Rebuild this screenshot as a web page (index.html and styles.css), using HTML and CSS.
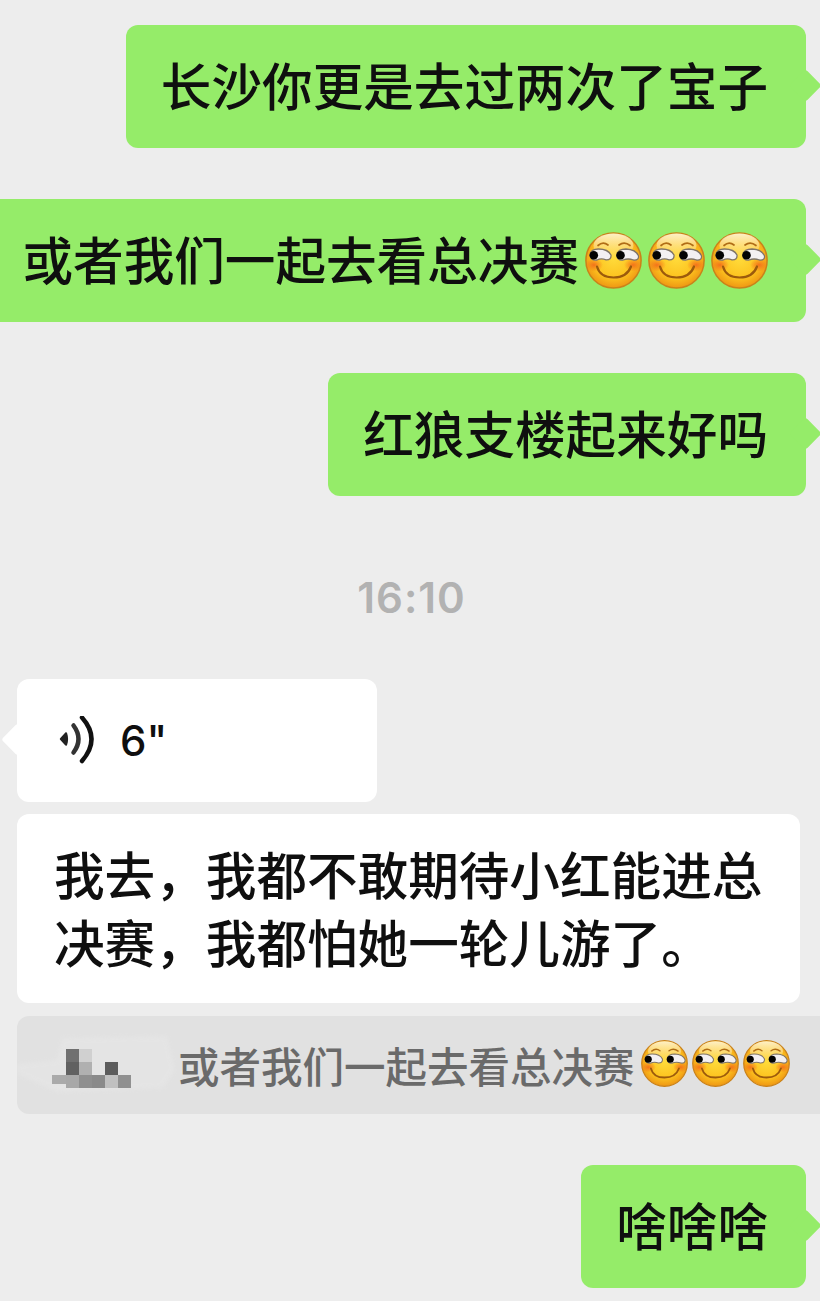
FILE: index.html
```html
<!DOCTYPE html>
<html lang="zh-CN">
<head>
<meta charset="utf-8">
<title>聊天</title>
<link rel="stylesheet" href="styles.css">
</head>
<body>
<svg class="defs" aria-hidden="true">
  <defs>
    <radialGradient id="face" cx="50%" cy="45%" r="60%">
      <stop offset="0" stop-color="#ffdc3c"/>
      <stop offset="0.6" stop-color="#fdc31f"/>
      <stop offset="1" stop-color="#ea8a10"/>
    </radialGradient>
    <linearGradient id="shine" x1="0" y1="0" x2="0" y2="1">
      <stop offset="0" stop-color="#fff4cf" stop-opacity="0.95"/>
      <stop offset="1" stop-color="#fff4cf" stop-opacity="0"/>
    </linearGradient>
    <radialGradient id="blush" cx="50%" cy="50%" r="50%">
      <stop offset="0" stop-color="#f2651a" stop-opacity="0.85"/>
      <stop offset="1" stop-color="#f2651a" stop-opacity="0"/>
    </radialGradient>
    <symbol id="smirk" viewBox="0 0 57 57">
      <circle cx="28.5" cy="28.5" r="27.6" fill="url(#face)" stroke="#c9821a" stroke-width="1.5"/>
      <ellipse cx="28.5" cy="13.5" rx="20" ry="12" fill="url(#shine)"/>
      <ellipse cx="9" cy="33" rx="9" ry="6.500" fill="url(#blush)"/>
      <ellipse cx="48" cy="33" rx="9" ry="6.500" fill="url(#blush)"/>
      <path d="M13 13.5Q18 9 23 13" fill="none" stroke="#b06d16" stroke-width="1.700" stroke-linecap="round"/>
      <path d="M34 13Q39.5 9 45 13.5" fill="none" stroke="#b06d16" stroke-width="1.700" stroke-linecap="round"/>
      <path d="M5 22.500Q6 17 13.500 17Q23 17 26 23Q26.500 28 21 27.800Q16 26 12 28Q5.500 29 5 22.500Z" fill="#f3f0f2" stroke="#7f7468" stroke-width="1.300"/>
      <path d="M32 22.500Q33 17 41 17Q51 17.500 53.500 24Q54 28.500 48.500 28Q43 26 38 28Q32 29 32 22.500Z" fill="#f3f0f2" stroke="#7f7468" stroke-width="1.300"/>
      <circle cx="8.800" cy="23.300" r="4.300" fill="#030303"/>
      <circle cx="35.500" cy="23.300" r="4.300" fill="#030303"/>
      <path d="M12 34.500Q15 45.500 28.500 45.500Q42 45.500 46 34.500" fill="none" stroke="#9c5a0c" stroke-width="2.200" stroke-linecap="round"/>
    </symbol>
    <filter id="soft" x="-10%" y="-10%" width="120%" height="120%">
      <feGaussianBlur stdDeviation="2"/>
    </filter>
  </defs>
</svg>

<main class="chat">
  <div class="bubble sent">长沙你更是去过两次了宝子</div>
  <div class="bubble sent gap">或者我们一起去看总决赛<svg class="emoji"><use href="#smirk"/></svg><svg class="emoji"><use href="#smirk"/></svg><svg class="emoji"><use href="#smirk"/></svg></div>
  <div class="bubble sent gap">红狼支楼起来好吗</div>

  <div class="time">16:10</div>

  <div class="bubble received voice">
    <svg class="wave" viewBox="0 0 40 50" aria-hidden="true">
      <path d="M8 17.500L3 23L8 28.500Q9.800 23 8 17.500Z" fill="#222" stroke="#222" stroke-width="2.400" stroke-linejoin="round"/>
      <path d="M15.500 9.500Q25.500 23 15.500 36.500" fill="none" stroke="#333" stroke-width="4.500" stroke-linecap="round"/>
      <path d="M24 1.500Q43 23 24 45" fill="none" stroke="#111" stroke-width="4.500" stroke-linecap="round"/>
    </svg>
    <span class="seconds">6"</span>
  </div>
  <div class="bubble received text">我去&#xFF0C;我都不敢期待小红能进总决赛&#xFF0C;我都怕她一轮儿游了。</div>

  <div class="quote">
    <svg class="mosaic" viewBox="0 0 160 70" aria-hidden="true">
      <path d="M0 34L40 30L45 8L150 6L158 40L146 58L40 62L0 44Z" fill="#e9e9e9" opacity="0.45" filter="url(#soft)"/>
      <rect x="49" y="19" width="13" height="13" fill="#707070"/>
      <rect x="62" y="19" width="13" height="13" fill="#d0d0d0"/>
      <rect x="49" y="32" width="13" height="13" fill="#616161"/>
      <rect x="62" y="32" width="13" height="13" fill="#b0b0b0"/>
      <rect x="88" y="32" width="13" height="13" fill="#5c5c5c"/>
      <rect x="35" y="45" width="14" height="9" fill="#aaaaaa"/>
      <rect x="49" y="45" width="13" height="13" fill="#a8a8a8"/>
      <rect x="62" y="45" width="13" height="13" fill="#8f8f8f"/>
      <rect x="75" y="45" width="13" height="13" fill="#8a8a8a"/>
      <rect x="88" y="45" width="13" height="13" fill="#c0c0c0"/>
      <rect x="101" y="45" width="13" height="13" fill="#909090"/>
    </svg>
    <span class="quote-text">或者我们一起去看总决赛</span><svg class="emoji small first"><use href="#smirk"/></svg><svg class="emoji small"><use href="#smirk"/></svg><svg class="emoji small"><use href="#smirk"/></svg>
  </div>

  <div class="bubble sent gap">啥啥啥</div>
</main>
</body>
</html>
```

FILE: styles.css
```css
html, body {
  margin: 0;
  padding: 0;
}

body {
  width: 820px;
  height: 1301px;
  overflow: hidden;
  background: #ededed;
  font-family: "Noto Sans CJK SC", "Noto Sans", sans-serif;
  color: #0f0f0f;
}

.defs {
  position: absolute;
  width: 0;
  height: 0;
}

.chat {
  display: flex;
  flex-direction: column;
  align-items: flex-start;
  padding: 25px 14px 0 17px;
}

.bubble {
  position: relative;
  box-sizing: border-box;
  flex: none;
  height: 123px;
  padding: 25px 38px 30px 35px;
  border-radius: 12px;
  font-size: 50.6px;
  font-weight: 500;
  line-height: 68px;
}

.bubble::after {
  content: "";
  position: absolute;
  top: 49px;
  width: 23px;
  height: 23px;
  border-radius: 3px;
  transform: rotate(45deg);
}

.sent {
  align-self: flex-end;
  background: #95ec69;
  white-space: nowrap;
}

.sent::after {
  right: -11px;
  background: #95ec69;
}

.gap {
  margin-top: 51px;
}

.received {
  background: #ffffff;
}

.received::after {
  left: -11px;
  background: #ffffff;
}

.time {
  align-self: center;
  margin: 78px 0 57px;
  font-family: "Inter", "Liberation Sans", sans-serif;
  font-size: 42px;
  font-weight: 600;
  letter-spacing: 1px;
  line-height: 48px;
  color: #b2b2b2;
}

.voice {
  display: flex;
  align-items: center;
  width: 360px;
  padding: 0 0 0 41px;
}

.wave {
  flex: none;
  width: 40px;
  height: 50px;
}

.seconds {
  margin-left: 22px;
  font-family: "Inter", "Liberation Sans", sans-serif;
  font-size: 42px;
  font-weight: 500;
  line-height: 48px;
}

.text {
  width: 783px;
  height: 189px;
  margin-top: 12px;
  padding: 25px 37px 28px;
}

.text::after {
  display: none;
}

.quote {
  display: flex;
  flex: none;
  align-items: center;
  align-self: stretch;
  box-sizing: border-box;
  height: 98px;
  margin: 13px -30px 0 0;
  border-radius: 12px;
  background: #e1e1e1;
}

.mosaic {
  flex: none;
  width: 160px;
  height: 70px;
  margin-right: 1px;
}

.quote-text {
  font-size: 41.5px;
  font-weight: 500;
  line-height: 56px;
  white-space: nowrap;
  color: #6a6a6a;
}

.emoji {
  display: inline-block;
  flex: none;
  width: 57px;
  height: 57px;
  margin: 0 0 0 6px;
  vertical-align: -9px;
}

.small {
  position: relative;
  top: -2px;
  width: 47px;
  height: 47px;
  margin: 0 0 0 4px;
}

.small.first {
  margin-left: 6px;
}
```
